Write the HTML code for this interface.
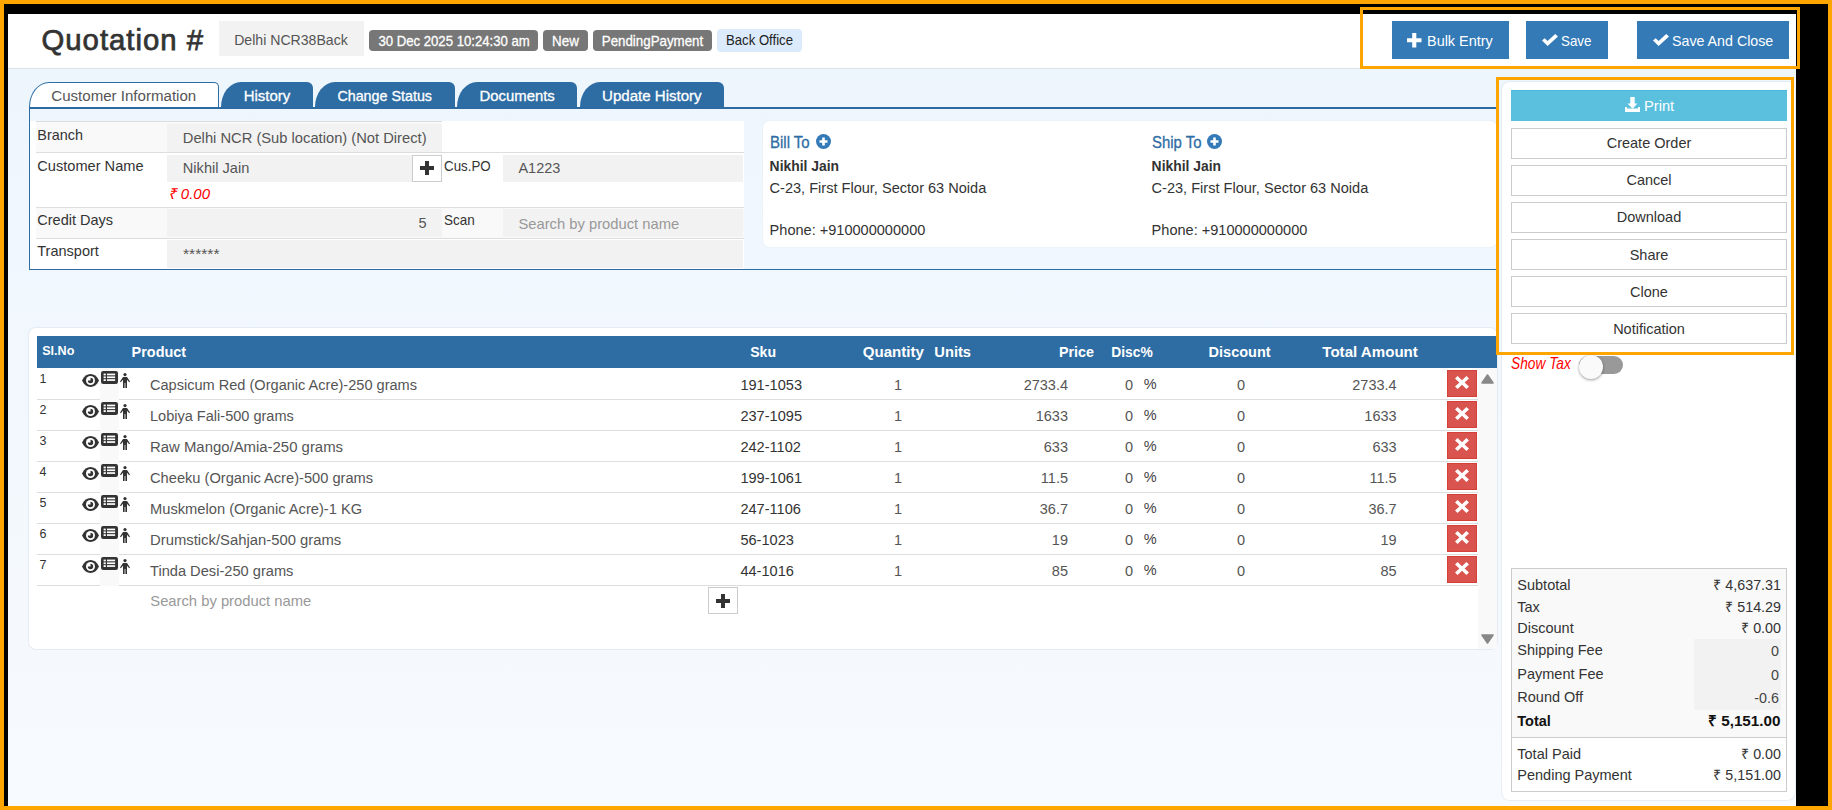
<!DOCTYPE html>
<html><head><meta charset="utf-8"><style>
html,body{margin:0;padding:0;width:1832px;height:810px;overflow:hidden;position:relative;font-family:"Liberation Sans",sans-serif;}
.t{position:absolute;white-space:nowrap;}
.r{position:absolute;}
</style></head><body>
<div class="r" style="left:0px;top:0px;width:1832px;height:810px;background:#ffa500;"></div>
<div class="r" style="left:4px;top:4px;width:1824px;height:802px;background:#000;"></div>
<div class="r" style="left:8px;top:14px;width:1788px;height:792px;background:#f2f7fc;"></div>
<div class="r" style="left:8px;top:14px;width:1788px;height:54px;background:#fff;"></div>
<div class="r" style="left:8px;top:68px;width:1788px;height:1px;background:#dde3e8;"></div>
<div class="r" style="left:8px;top:69px;width:1788px;height:737px;background:linear-gradient(#eef6fd,#f7fafe);"></div>
<div class="t" style="left:41.5px;top:25px;font-size:29.3px;line-height:29.3px;font-weight:400;color:#333;font-style:normal;letter-spacing:1px;-webkit-text-stroke:0.75px #333;">Quotation #</div>
<div class="r" style="left:219px;top:21px;width:145px;height:35px;background:#f2f2f2;"></div>
<div class="t" style="left:234.2px;top:33px;font-size:14.1px;line-height:14.1px;font-weight:400;color:#555;font-style:normal;">Delhi NCR38Back</div>
<div class="r" style="left:369px;top:30px;width:169px;height:21px;background:#777;border-radius:4px;"></div>
<div class="t" style="left:369px;width:169px;text-align:center;top:34px;font-size:14.8px;line-height:14.8px;font-weight:400;color:#fff;font-style:normal;-webkit-text-stroke:0.3px #fff;transform:scaleX(0.8890);transform-origin:center;">30 Dec 2025 10:24:30 am</div>
<div class="r" style="left:543px;top:30px;width:45px;height:21px;background:#777;border-radius:4px;"></div>
<div class="t" style="left:543px;width:45px;text-align:center;top:34px;font-size:14.8px;line-height:14.8px;font-weight:400;color:#fff;font-style:normal;-webkit-text-stroke:0.3px #fff;transform:scaleX(0.9051);transform-origin:center;">New</div>
<div class="r" style="left:593px;top:30px;width:119px;height:21px;background:#777;border-radius:4px;"></div>
<div class="t" style="left:593px;width:119px;text-align:center;top:34px;font-size:14.8px;line-height:14.8px;font-weight:400;color:#fff;font-style:normal;-webkit-text-stroke:0.3px #fff;transform:scaleX(0.9006);transform-origin:center;">PendingPayment</div>
<div class="r" style="left:717px;top:29px;width:85px;height:23px;background:#dcebfb;border-radius:4px;"></div>
<div class="t" style="left:717px;width:85px;text-align:center;top:33px;font-size:14.8px;line-height:14.8px;font-weight:400;color:#222;font-style:normal;transform:scaleX(0.8887);transform-origin:center;">Back Office</div>
<div class="r" style="left:1392px;top:21px;width:117px;height:38px;background:#337ab7;"></div>
<svg class="r" style="left:1407px;top:33px" width="14.5" height="14.5" viewBox="0 0 14 14"><path d="M5 0h4v5h5v4H9v5H5V9H0V5h5z" fill="#fff"/></svg>
<div class="t" style="left:1427px;top:33px;font-size:15px;line-height:15px;font-weight:400;color:#fff;font-style:normal;transform:scaleX(0.9626);transform-origin:left;">Bulk Entry</div>
<div class="r" style="left:1526px;top:21px;width:82px;height:38px;background:#337ab7;"></div>
<svg class="r" style="left:1542px;top:34px" width="16" height="12" viewBox="0 0 16 12"><path d="M0 6.6 L2.6 4.2 L5.6 7 L13.2 0 L16 2.6 L5.6 12 Z" fill="#fff"/></svg>
<div class="t" style="left:1561.3px;top:33px;font-size:15px;line-height:15px;font-weight:400;color:#fff;font-style:normal;transform:scaleX(0.8917);transform-origin:left;">Save</div>
<div class="r" style="left:1637px;top:21px;width:152px;height:38px;background:#337ab7;"></div>
<svg class="r" style="left:1653px;top:34px" width="16" height="12" viewBox="0 0 16 12"><path d="M0 6.6 L2.6 4.2 L5.6 7 L13.2 0 L16 2.6 L5.6 12 Z" fill="#fff"/></svg>
<div class="t" style="left:1672.4px;top:33px;font-size:15px;line-height:15px;font-weight:400;color:#fff;font-style:normal;transform:scaleX(0.9489);transform-origin:left;">Save And Close</div>
<div class="r" style="left:1360px;top:7px;width:440px;height:62px;border:3px solid #ffa500;box-sizing:border-box;"></div>
<div class="r" style="left:29px;top:82px;width:190px;height:26px;background:#fff;border:1px solid #2e6da4;border-bottom:none;border-radius:20px 5px 0 0 / 25px 5px 0 0;box-sizing:border-box;"></div>
<div class="t" style="left:51.25px;top:88px;font-size:15.08px;line-height:15.08px;font-weight:400;color:#555;font-style:normal;">Customer Information</div>
<div class="r" style="left:221px;top:82px;width:92px;height:26px;background:#2e6da4;border-radius:20px 6px 0 0 / 25px 6px 0 0;"></div>
<div class="t" style="left:243.7px;top:88px;font-size:15.0px;line-height:15.0px;font-weight:400;color:#fff;font-style:normal;-webkit-text-stroke:0.3px #fff;">History</div>
<div class="r" style="left:315px;top:82px;width:140px;height:26px;background:#2e6da4;border-radius:20px 6px 0 0 / 25px 6px 0 0;"></div>
<div class="t" style="left:337.4px;top:89px;font-size:14.3px;line-height:14.3px;font-weight:400;color:#fff;font-style:normal;-webkit-text-stroke:0.3px #fff;">Change Status</div>
<div class="r" style="left:457px;top:82px;width:120px;height:26px;background:#2e6da4;border-radius:20px 6px 0 0 / 25px 6px 0 0;"></div>
<div class="t" style="left:479.5px;top:89px;font-size:14.9px;line-height:14.9px;font-weight:400;color:#fff;font-style:normal;-webkit-text-stroke:0.3px #fff;">Documents</div>
<div class="r" style="left:580px;top:82px;width:144px;height:26px;background:#2e6da4;border-radius:20px 6px 0 0 / 25px 6px 0 0;"></div>
<div class="t" style="left:602px;top:88px;font-size:15.07px;line-height:15.07px;font-weight:400;color:#fff;font-style:normal;-webkit-text-stroke:0.3px #fff;">Update History</div>
<div class="r" style="left:29px;top:107px;width:1468px;height:2px;background:#2d6aa1;"></div>
<div class="r" style="left:29px;top:109px;width:1px;height:161px;background:#2e6da4;"></div>
<div class="r" style="left:29px;top:269px;width:1468px;height:1px;background:#2e6da4;"></div>
<div class="r" style="left:30px;top:121px;width:714px;height:148px;background:#fff;"></div>
<div class="r" style="left:36px;top:121px;width:406px;height:31px;background:#f9f9f9;"></div>
<div class="r" style="left:442px;top:121px;width:302px;height:31px;background:#fff;"></div>
<div class="r" style="left:36px;top:152px;width:708px;height:55px;background:#fff;"></div>
<div class="r" style="left:36px;top:207px;width:708px;height:31px;background:#f9f9f9;"></div>
<div class="r" style="left:36px;top:238px;width:708px;height:31px;background:#fff;"></div>
<div class="r" style="left:36px;top:121px;width:406px;height:1px;background:#dddddd;"></div>
<div class="r" style="left:36px;top:152px;width:708px;height:1px;background:#dddddd;"></div>
<div class="r" style="left:36px;top:207px;width:708px;height:1px;background:#dddddd;"></div>
<div class="r" style="left:36px;top:238px;width:708px;height:1px;background:#dddddd;"></div>
<div class="r" style="left:167px;top:124px;width:275px;height:28px;background:#f2f2f2;"></div>
<div class="r" style="left:167px;top:155px;width:245px;height:27px;background:#f2f2f2;"></div>
<div class="r" style="left:503px;top:155px;width:240px;height:27px;background:#f2f2f2;"></div>
<div class="r" style="left:167px;top:209px;width:275px;height:28px;background:#f2f2f2;"></div>
<div class="r" style="left:503px;top:209px;width:240px;height:28px;background:#f2f2f2;"></div>
<div class="r" style="left:167px;top:240px;width:576px;height:28px;background:#f2f2f2;"></div>
<div class="r" style="left:412px;top:155px;width:30px;height:27px;background:#fff;border:1px solid #ccc;box-sizing:border-box;"></div>
<svg class="r" style="left:420px;top:161px" width="14" height="14" viewBox="0 0 14 14"><path d="M5 0h4v5h5v4H9v5H5V9H0V5h5z" fill="#333"/></svg>
<div class="t" style="left:37.3px;top:128px;font-size:14.4px;line-height:14.4px;font-weight:400;color:#333;font-style:normal;">Branch</div>
<div class="t" style="left:37.3px;top:159px;font-size:14.6px;line-height:14.6px;font-weight:400;color:#333;font-style:normal;">Customer Name</div>
<div class="t" style="left:37.3px;top:213px;font-size:14.5px;line-height:14.5px;font-weight:400;color:#333;font-style:normal;">Credit Days</div>
<div class="t" style="left:37.3px;top:244px;font-size:14.5px;line-height:14.5px;font-weight:400;color:#333;font-style:normal;">Transport</div>
<div class="t" style="left:182.8px;top:131px;font-size:14.73px;line-height:14.73px;font-weight:400;color:#555;font-style:normal;">Delhi NCR (Sub location) (Not Direct)</div>
<div class="t" style="left:182.8px;top:161px;font-size:14.6px;line-height:14.6px;font-weight:400;color:#555;font-style:normal;">Nikhil Jain</div>
<div class="t" style="left:167.7px;top:186px;font-size:15px;line-height:15px;font-weight:400;color:#f00;font-style:italic;">₹ 0.00</div>
<div class="t" style="right:1405.5px;top:216px;font-size:14.5px;line-height:14.5px;font-weight:400;color:#555;font-style:normal;">5</div>
<div class="t" style="left:182.8px;top:247px;font-size:14.5px;line-height:14.5px;font-weight:400;color:#555;font-style:normal;transform:scaleX(1.0780);transform-origin:left;">******</div>
<div class="t" style="left:444.4px;top:159px;font-size:14.5px;line-height:14.5px;font-weight:400;color:#333;font-style:normal;transform:scaleX(0.9199);transform-origin:left;">Cus.PO</div>
<div class="t" style="left:444.4px;top:213px;font-size:14.5px;line-height:14.5px;font-weight:400;color:#333;font-style:normal;transform:scaleX(0.9285);transform-origin:left;">Scan</div>
<div class="t" style="left:518.4px;top:161px;font-size:14.5px;line-height:14.5px;font-weight:400;color:#555;font-style:normal;">A1223</div>
<div class="t" style="left:518.4px;top:217px;font-size:14.77px;line-height:14.77px;font-weight:400;color:#999;font-style:normal;">Search by product name</div>
<div class="r" style="left:763px;top:121px;width:734px;height:126px;background:#fff;border-radius:7px;box-shadow:0 0 0 1px rgba(222,230,238,0.25);"></div>
<div class="t" style="left:769.6px;top:135px;font-size:16px;line-height:16px;font-weight:400;color:#2e6da4;font-style:normal;-webkit-text-stroke:0.3px #2e6da4;transform:scaleX(0.9365);transform-origin:left;">Bill To</div>
<div class="t" style="left:769.6px;top:160px;font-size:13.9px;line-height:13.9px;font-weight:700;color:#333;font-style:normal;">Nikhil Jain</div>
<div class="t" style="left:769.6px;top:181px;font-size:14.55px;line-height:14.55px;font-weight:400;color:#333;font-style:normal;">C-23, First Flour, Sector 63 Noida</div>
<div class="t" style="left:769.6px;top:223px;font-size:14.55px;line-height:14.55px;font-weight:400;color:#333;font-style:normal;">Phone: +910000000000</div>
<div class="t" style="left:1151.6px;top:135px;font-size:16px;line-height:16px;font-weight:400;color:#2e6da4;font-style:normal;-webkit-text-stroke:0.3px #2e6da4;transform:scaleX(0.9326);transform-origin:left;">Ship To</div>
<div class="t" style="left:1151.6px;top:160px;font-size:13.9px;line-height:13.9px;font-weight:700;color:#333;font-style:normal;">Nikhil Jain</div>
<div class="t" style="left:1151.6px;top:181px;font-size:14.55px;line-height:14.55px;font-weight:400;color:#333;font-style:normal;">C-23, First Flour, Sector 63 Noida</div>
<div class="t" style="left:1151.6px;top:223px;font-size:14.55px;line-height:14.55px;font-weight:400;color:#333;font-style:normal;">Phone: +910000000000</div>
<svg class="r" style="left:816px;top:134px" width="15" height="15" viewBox="0 0 15 15"><circle cx="7.5" cy="7.5" r="7.5" fill="#337ab7"/><path d="M6.2 3.5h2.6v2.7h2.7v2.6H8.8v2.7H6.2V8.8H3.5V6.2h2.7z" fill="#fff"/></svg>
<svg class="r" style="left:1207px;top:134px" width="15" height="15" viewBox="0 0 15 15"><circle cx="7.5" cy="7.5" r="7.5" fill="#337ab7"/><path d="M6.2 3.5h2.6v2.7h2.7v2.6H8.8v2.7H6.2V8.8H3.5V6.2h2.7z" fill="#fff"/></svg>
<div class="r" style="left:29px;top:328px;width:1468px;height:321px;background:#fff;border-radius:7px;box-shadow:0 0 0 1px rgba(222,230,238,0.7);"></div>
<div class="r" style="left:37px;top:336px;width:1460px;height:32px;background:#2e6da4;"></div>
<div class="t" style="left:42.2px;top:345px;font-size:12.6px;line-height:12.6px;font-weight:700;color:#fff;font-style:normal;">Sl.No</div>
<div class="t" style="left:131.6px;top:345px;font-size:14.45px;line-height:14.45px;font-weight:700;color:#fff;font-style:normal;">Product</div>
<div class="t" style="left:750.2px;top:345px;font-size:14.1px;line-height:14.1px;font-weight:700;color:#fff;font-style:normal;">Sku</div>
<div class="t" style="left:862.7px;top:344px;font-size:15.1px;line-height:15.1px;font-weight:700;color:#fff;font-style:normal;">Quantity</div>
<div class="t" style="left:934.3px;top:345px;font-size:14.7px;line-height:14.7px;font-weight:700;color:#fff;font-style:normal;">Units</div>
<div class="t" style="right:738px;top:345px;font-size:14.3px;line-height:14.3px;font-weight:700;color:#fff;font-style:normal;">Price</div>
<div class="t" style="left:1111.3px;top:346px;font-size:13.8px;line-height:13.8px;font-weight:700;color:#fff;font-style:normal;">Disc%</div>
<div class="t" style="left:1208.6px;top:345px;font-size:14.5px;line-height:14.5px;font-weight:700;color:#fff;font-style:normal;">Discount</div>
<div class="t" style="left:1322.3px;top:344px;font-size:15.1px;line-height:15.1px;font-weight:700;color:#fff;font-style:normal;">Total Amount</div>
<div class="r" style="left:1478px;top:368px;width:19px;height:281px;background:#f9f9f9;"></div>
<svg class="r" style="left:1481px;top:374px" width="13" height="10" viewBox="0 0 13 10"><path d="M6.5 1 L12 9 H1 Z" fill="#888" stroke="#888" stroke-width="1.6" stroke-linejoin="round"/></svg>
<svg class="r" style="left:1481px;top:634px" width="13" height="10" viewBox="0 0 13 10"><path d="M6.5 9 L12 1 H1 Z" fill="#888" stroke="#888" stroke-width="1.6" stroke-linejoin="round"/></svg>
<div class="r" style="left:37px;top:399px;width:1441px;height:1px;background:#dddddd;"></div>
<div class="r" style="left:100px;top:368px;width:19px;height:32px;background:#f9f9f9;"></div>
<div class="t" style="left:39.5px;top:373px;font-size:12.5px;line-height:12.5px;font-weight:400;color:#333;font-style:normal;">1</div>
<svg class="r" style="left:82px;top:374px" width="17" height="13" viewBox="0 0 17 13"><path d="M0 6.5 C2.2 2 5 0 8.5 0 C12 0 14.8 2 17 6.5 C14.8 11 12 13 8.5 13 C5 13 2.2 11 0 6.5Z" fill="#333"/><circle cx="8.5" cy="6.5" r="4.5" fill="#fff"/><path d="M8.5 6.5 L8.5 3.8 A2.7 2.7 0 1 1 5.8 6.5 Z" fill="#333"/></svg>
<svg class="r" style="left:101px;top:371px" width="17" height="13" viewBox="0 0 17 13"><rect x="0" y="0" width="17" height="13" rx="2.2" fill="#333"/><rect x="2.6" y="2.6" width="2.2" height="1.8" fill="#fff"/><rect x="2.6" y="5.4" width="2.2" height="1.8" fill="#fff"/><rect x="2.6" y="8.2" width="2.2" height="1.8" fill="#fff"/><rect x="6" y="2.6" width="8.1" height="1.7" fill="#fff"/><rect x="6" y="5.4" width="8.1" height="1.7" fill="#fff"/><rect x="6" y="8.2" width="8.1" height="1.7" fill="#fff"/></svg>
<svg class="r" style="left:120px;top:373px" width="10" height="15" viewBox="0 0 10 15"><circle cx="5" cy="1.6" r="1.6" fill="#333"/><path d="M3 4 H7 L10 8.6 L9.2 9.2 L7 6.8 V15 H5.4 V10 H4.6 V15 H3 V6.8 L0.8 9.2 L0 8.6Z" fill="#333"/></svg>
<div class="t" style="left:150.2px;top:377px;font-size:15.5px;line-height:15.5px;font-weight:400;color:#555;font-style:normal;transform:scaleX(0.9392);transform-origin:left;">Capsicum Red (Organic Acre)-250 grams</div>
<div class="t" style="left:740.4px;top:378px;font-size:14.58px;line-height:14.58px;font-weight:400;color:#333;font-style:normal;">191-1053</div>
<div class="t" style="right:930px;top:378px;font-size:14.5px;line-height:14.5px;font-weight:400;color:#555;font-style:normal;">1</div>
<div class="t" style="right:764px;top:378px;font-size:14.5px;line-height:14.5px;font-weight:400;color:#555;font-style:normal;">2733.4</div>
<div class="t" style="right:699px;top:378px;font-size:14.5px;line-height:14.5px;font-weight:400;color:#555;font-style:normal;">0</div>
<div class="t" style="left:1143.7px;top:377px;font-size:14.5px;line-height:14.5px;font-weight:400;color:#444;font-style:normal;">%</div>
<div class="t" style="right:587px;top:378px;font-size:14.5px;line-height:14.5px;font-weight:400;color:#555;font-style:normal;">0</div>
<div class="t" style="right:435.4000000000001px;top:378px;font-size:14.5px;line-height:14.5px;font-weight:400;color:#555;font-style:normal;">2733.4</div>
<div class="r" style="left:1447px;top:370px;width:30px;height:27px;background:#d9534f;border:1px solid #d43f3a;box-sizing:border-box;"></div><svg class="r" style="left:1455px;top:376px" width="14" height="13" viewBox="0 0 14 13"><path d="M0 2.6 L2.6 0 L7 4.2 L11.4 0 L14 2.6 L9.6 6.5 L14 10.4 L11.4 13 L7 8.8 L2.6 13 L0 10.4 L4.4 6.5Z" fill="#fff"/></svg>
<div class="r" style="left:37px;top:430px;width:1441px;height:1px;background:#dddddd;"></div>
<div class="r" style="left:100px;top:399px;width:19px;height:32px;background:#f9f9f9;"></div>
<div class="t" style="left:39.5px;top:404px;font-size:12.5px;line-height:12.5px;font-weight:400;color:#333;font-style:normal;">2</div>
<svg class="r" style="left:82px;top:405px" width="17" height="13" viewBox="0 0 17 13"><path d="M0 6.5 C2.2 2 5 0 8.5 0 C12 0 14.8 2 17 6.5 C14.8 11 12 13 8.5 13 C5 13 2.2 11 0 6.5Z" fill="#333"/><circle cx="8.5" cy="6.5" r="4.5" fill="#fff"/><path d="M8.5 6.5 L8.5 3.8 A2.7 2.7 0 1 1 5.8 6.5 Z" fill="#333"/></svg>
<svg class="r" style="left:101px;top:402px" width="17" height="13" viewBox="0 0 17 13"><rect x="0" y="0" width="17" height="13" rx="2.2" fill="#333"/><rect x="2.6" y="2.6" width="2.2" height="1.8" fill="#fff"/><rect x="2.6" y="5.4" width="2.2" height="1.8" fill="#fff"/><rect x="2.6" y="8.2" width="2.2" height="1.8" fill="#fff"/><rect x="6" y="2.6" width="8.1" height="1.7" fill="#fff"/><rect x="6" y="5.4" width="8.1" height="1.7" fill="#fff"/><rect x="6" y="8.2" width="8.1" height="1.7" fill="#fff"/></svg>
<svg class="r" style="left:120px;top:404px" width="10" height="15" viewBox="0 0 10 15"><circle cx="5" cy="1.6" r="1.6" fill="#333"/><path d="M3 4 H7 L10 8.6 L9.2 9.2 L7 6.8 V15 H5.4 V10 H4.6 V15 H3 V6.8 L0.8 9.2 L0 8.6Z" fill="#333"/></svg>
<div class="t" style="left:150.2px;top:408px;font-size:15.5px;line-height:15.5px;font-weight:400;color:#555;font-style:normal;transform:scaleX(0.9377);transform-origin:left;">Lobiya Fali-500 grams</div>
<div class="t" style="left:740.4px;top:409px;font-size:14.58px;line-height:14.58px;font-weight:400;color:#333;font-style:normal;">237-1095</div>
<div class="t" style="right:930px;top:409px;font-size:14.5px;line-height:14.5px;font-weight:400;color:#555;font-style:normal;">1</div>
<div class="t" style="right:764px;top:409px;font-size:14.5px;line-height:14.5px;font-weight:400;color:#555;font-style:normal;">1633</div>
<div class="t" style="right:699px;top:409px;font-size:14.5px;line-height:14.5px;font-weight:400;color:#555;font-style:normal;">0</div>
<div class="t" style="left:1143.7px;top:408px;font-size:14.5px;line-height:14.5px;font-weight:400;color:#444;font-style:normal;">%</div>
<div class="t" style="right:587px;top:409px;font-size:14.5px;line-height:14.5px;font-weight:400;color:#555;font-style:normal;">0</div>
<div class="t" style="right:435.4000000000001px;top:409px;font-size:14.5px;line-height:14.5px;font-weight:400;color:#555;font-style:normal;">1633</div>
<div class="r" style="left:1447px;top:401px;width:30px;height:27px;background:#d9534f;border:1px solid #d43f3a;box-sizing:border-box;"></div><svg class="r" style="left:1455px;top:407px" width="14" height="13" viewBox="0 0 14 13"><path d="M0 2.6 L2.6 0 L7 4.2 L11.4 0 L14 2.6 L9.6 6.5 L14 10.4 L11.4 13 L7 8.8 L2.6 13 L0 10.4 L4.4 6.5Z" fill="#fff"/></svg>
<div class="r" style="left:37px;top:461px;width:1441px;height:1px;background:#dddddd;"></div>
<div class="r" style="left:100px;top:430px;width:19px;height:32px;background:#f9f9f9;"></div>
<div class="t" style="left:39.5px;top:435px;font-size:12.5px;line-height:12.5px;font-weight:400;color:#333;font-style:normal;">3</div>
<svg class="r" style="left:82px;top:436px" width="17" height="13" viewBox="0 0 17 13"><path d="M0 6.5 C2.2 2 5 0 8.5 0 C12 0 14.8 2 17 6.5 C14.8 11 12 13 8.5 13 C5 13 2.2 11 0 6.5Z" fill="#333"/><circle cx="8.5" cy="6.5" r="4.5" fill="#fff"/><path d="M8.5 6.5 L8.5 3.8 A2.7 2.7 0 1 1 5.8 6.5 Z" fill="#333"/></svg>
<svg class="r" style="left:101px;top:433px" width="17" height="13" viewBox="0 0 17 13"><rect x="0" y="0" width="17" height="13" rx="2.2" fill="#333"/><rect x="2.6" y="2.6" width="2.2" height="1.8" fill="#fff"/><rect x="2.6" y="5.4" width="2.2" height="1.8" fill="#fff"/><rect x="2.6" y="8.2" width="2.2" height="1.8" fill="#fff"/><rect x="6" y="2.6" width="8.1" height="1.7" fill="#fff"/><rect x="6" y="5.4" width="8.1" height="1.7" fill="#fff"/><rect x="6" y="8.2" width="8.1" height="1.7" fill="#fff"/></svg>
<svg class="r" style="left:120px;top:435px" width="10" height="15" viewBox="0 0 10 15"><circle cx="5" cy="1.6" r="1.6" fill="#333"/><path d="M3 4 H7 L10 8.6 L9.2 9.2 L7 6.8 V15 H5.4 V10 H4.6 V15 H3 V6.8 L0.8 9.2 L0 8.6Z" fill="#333"/></svg>
<div class="t" style="left:150.2px;top:439px;font-size:15.5px;line-height:15.5px;font-weight:400;color:#555;font-style:normal;transform:scaleX(0.9615);transform-origin:left;">Raw Mango/Amia-250 grams</div>
<div class="t" style="left:740.4px;top:440px;font-size:14.58px;line-height:14.58px;font-weight:400;color:#333;font-style:normal;">242-1102</div>
<div class="t" style="right:930px;top:440px;font-size:14.5px;line-height:14.5px;font-weight:400;color:#555;font-style:normal;">1</div>
<div class="t" style="right:764px;top:440px;font-size:14.5px;line-height:14.5px;font-weight:400;color:#555;font-style:normal;">633</div>
<div class="t" style="right:699px;top:440px;font-size:14.5px;line-height:14.5px;font-weight:400;color:#555;font-style:normal;">0</div>
<div class="t" style="left:1143.7px;top:439px;font-size:14.5px;line-height:14.5px;font-weight:400;color:#444;font-style:normal;">%</div>
<div class="t" style="right:587px;top:440px;font-size:14.5px;line-height:14.5px;font-weight:400;color:#555;font-style:normal;">0</div>
<div class="t" style="right:435.4000000000001px;top:440px;font-size:14.5px;line-height:14.5px;font-weight:400;color:#555;font-style:normal;">633</div>
<div class="r" style="left:1447px;top:432px;width:30px;height:27px;background:#d9534f;border:1px solid #d43f3a;box-sizing:border-box;"></div><svg class="r" style="left:1455px;top:438px" width="14" height="13" viewBox="0 0 14 13"><path d="M0 2.6 L2.6 0 L7 4.2 L11.4 0 L14 2.6 L9.6 6.5 L14 10.4 L11.4 13 L7 8.8 L2.6 13 L0 10.4 L4.4 6.5Z" fill="#fff"/></svg>
<div class="r" style="left:37px;top:492px;width:1441px;height:1px;background:#dddddd;"></div>
<div class="r" style="left:100px;top:461px;width:19px;height:32px;background:#f9f9f9;"></div>
<div class="t" style="left:39.5px;top:466px;font-size:12.5px;line-height:12.5px;font-weight:400;color:#333;font-style:normal;">4</div>
<svg class="r" style="left:82px;top:467px" width="17" height="13" viewBox="0 0 17 13"><path d="M0 6.5 C2.2 2 5 0 8.5 0 C12 0 14.8 2 17 6.5 C14.8 11 12 13 8.5 13 C5 13 2.2 11 0 6.5Z" fill="#333"/><circle cx="8.5" cy="6.5" r="4.5" fill="#fff"/><path d="M8.5 6.5 L8.5 3.8 A2.7 2.7 0 1 1 5.8 6.5 Z" fill="#333"/></svg>
<svg class="r" style="left:101px;top:464px" width="17" height="13" viewBox="0 0 17 13"><rect x="0" y="0" width="17" height="13" rx="2.2" fill="#333"/><rect x="2.6" y="2.6" width="2.2" height="1.8" fill="#fff"/><rect x="2.6" y="5.4" width="2.2" height="1.8" fill="#fff"/><rect x="2.6" y="8.2" width="2.2" height="1.8" fill="#fff"/><rect x="6" y="2.6" width="8.1" height="1.7" fill="#fff"/><rect x="6" y="5.4" width="8.1" height="1.7" fill="#fff"/><rect x="6" y="8.2" width="8.1" height="1.7" fill="#fff"/></svg>
<svg class="r" style="left:120px;top:466px" width="10" height="15" viewBox="0 0 10 15"><circle cx="5" cy="1.6" r="1.6" fill="#333"/><path d="M3 4 H7 L10 8.6 L9.2 9.2 L7 6.8 V15 H5.4 V10 H4.6 V15 H3 V6.8 L0.8 9.2 L0 8.6Z" fill="#333"/></svg>
<div class="t" style="left:150.2px;top:470px;font-size:15.5px;line-height:15.5px;font-weight:400;color:#555;font-style:normal;transform:scaleX(0.9452);transform-origin:left;">Cheeku (Organic Acre)-500 grams</div>
<div class="t" style="left:740.4px;top:471px;font-size:14.58px;line-height:14.58px;font-weight:400;color:#333;font-style:normal;">199-1061</div>
<div class="t" style="right:930px;top:471px;font-size:14.5px;line-height:14.5px;font-weight:400;color:#555;font-style:normal;">1</div>
<div class="t" style="right:764px;top:471px;font-size:14.5px;line-height:14.5px;font-weight:400;color:#555;font-style:normal;">11.5</div>
<div class="t" style="right:699px;top:471px;font-size:14.5px;line-height:14.5px;font-weight:400;color:#555;font-style:normal;">0</div>
<div class="t" style="left:1143.7px;top:470px;font-size:14.5px;line-height:14.5px;font-weight:400;color:#444;font-style:normal;">%</div>
<div class="t" style="right:587px;top:471px;font-size:14.5px;line-height:14.5px;font-weight:400;color:#555;font-style:normal;">0</div>
<div class="t" style="right:435.4000000000001px;top:471px;font-size:14.5px;line-height:14.5px;font-weight:400;color:#555;font-style:normal;">11.5</div>
<div class="r" style="left:1447px;top:463px;width:30px;height:27px;background:#d9534f;border:1px solid #d43f3a;box-sizing:border-box;"></div><svg class="r" style="left:1455px;top:469px" width="14" height="13" viewBox="0 0 14 13"><path d="M0 2.6 L2.6 0 L7 4.2 L11.4 0 L14 2.6 L9.6 6.5 L14 10.4 L11.4 13 L7 8.8 L2.6 13 L0 10.4 L4.4 6.5Z" fill="#fff"/></svg>
<div class="r" style="left:37px;top:523px;width:1441px;height:1px;background:#dddddd;"></div>
<div class="r" style="left:100px;top:492px;width:19px;height:32px;background:#f9f9f9;"></div>
<div class="t" style="left:39.5px;top:497px;font-size:12.5px;line-height:12.5px;font-weight:400;color:#333;font-style:normal;">5</div>
<svg class="r" style="left:82px;top:498px" width="17" height="13" viewBox="0 0 17 13"><path d="M0 6.5 C2.2 2 5 0 8.5 0 C12 0 14.8 2 17 6.5 C14.8 11 12 13 8.5 13 C5 13 2.2 11 0 6.5Z" fill="#333"/><circle cx="8.5" cy="6.5" r="4.5" fill="#fff"/><path d="M8.5 6.5 L8.5 3.8 A2.7 2.7 0 1 1 5.8 6.5 Z" fill="#333"/></svg>
<svg class="r" style="left:101px;top:495px" width="17" height="13" viewBox="0 0 17 13"><rect x="0" y="0" width="17" height="13" rx="2.2" fill="#333"/><rect x="2.6" y="2.6" width="2.2" height="1.8" fill="#fff"/><rect x="2.6" y="5.4" width="2.2" height="1.8" fill="#fff"/><rect x="2.6" y="8.2" width="2.2" height="1.8" fill="#fff"/><rect x="6" y="2.6" width="8.1" height="1.7" fill="#fff"/><rect x="6" y="5.4" width="8.1" height="1.7" fill="#fff"/><rect x="6" y="8.2" width="8.1" height="1.7" fill="#fff"/></svg>
<svg class="r" style="left:120px;top:497px" width="10" height="15" viewBox="0 0 10 15"><circle cx="5" cy="1.6" r="1.6" fill="#333"/><path d="M3 4 H7 L10 8.6 L9.2 9.2 L7 6.8 V15 H5.4 V10 H4.6 V15 H3 V6.8 L0.8 9.2 L0 8.6Z" fill="#333"/></svg>
<div class="t" style="left:150.2px;top:501px;font-size:15.5px;line-height:15.5px;font-weight:400;color:#555;font-style:normal;transform:scaleX(0.9475);transform-origin:left;">Muskmelon (Organic Acre)-1 KG</div>
<div class="t" style="left:740.4px;top:502px;font-size:14.58px;line-height:14.58px;font-weight:400;color:#333;font-style:normal;">247-1106</div>
<div class="t" style="right:930px;top:502px;font-size:14.5px;line-height:14.5px;font-weight:400;color:#555;font-style:normal;">1</div>
<div class="t" style="right:764px;top:502px;font-size:14.5px;line-height:14.5px;font-weight:400;color:#555;font-style:normal;">36.7</div>
<div class="t" style="right:699px;top:502px;font-size:14.5px;line-height:14.5px;font-weight:400;color:#555;font-style:normal;">0</div>
<div class="t" style="left:1143.7px;top:501px;font-size:14.5px;line-height:14.5px;font-weight:400;color:#444;font-style:normal;">%</div>
<div class="t" style="right:587px;top:502px;font-size:14.5px;line-height:14.5px;font-weight:400;color:#555;font-style:normal;">0</div>
<div class="t" style="right:435.4000000000001px;top:502px;font-size:14.5px;line-height:14.5px;font-weight:400;color:#555;font-style:normal;">36.7</div>
<div class="r" style="left:1447px;top:494px;width:30px;height:27px;background:#d9534f;border:1px solid #d43f3a;box-sizing:border-box;"></div><svg class="r" style="left:1455px;top:500px" width="14" height="13" viewBox="0 0 14 13"><path d="M0 2.6 L2.6 0 L7 4.2 L11.4 0 L14 2.6 L9.6 6.5 L14 10.4 L11.4 13 L7 8.8 L2.6 13 L0 10.4 L4.4 6.5Z" fill="#fff"/></svg>
<div class="r" style="left:37px;top:554px;width:1441px;height:1px;background:#dddddd;"></div>
<div class="r" style="left:100px;top:523px;width:19px;height:32px;background:#f9f9f9;"></div>
<div class="t" style="left:39.5px;top:528px;font-size:12.5px;line-height:12.5px;font-weight:400;color:#333;font-style:normal;">6</div>
<svg class="r" style="left:82px;top:529px" width="17" height="13" viewBox="0 0 17 13"><path d="M0 6.5 C2.2 2 5 0 8.5 0 C12 0 14.8 2 17 6.5 C14.8 11 12 13 8.5 13 C5 13 2.2 11 0 6.5Z" fill="#333"/><circle cx="8.5" cy="6.5" r="4.5" fill="#fff"/><path d="M8.5 6.5 L8.5 3.8 A2.7 2.7 0 1 1 5.8 6.5 Z" fill="#333"/></svg>
<svg class="r" style="left:101px;top:526px" width="17" height="13" viewBox="0 0 17 13"><rect x="0" y="0" width="17" height="13" rx="2.2" fill="#333"/><rect x="2.6" y="2.6" width="2.2" height="1.8" fill="#fff"/><rect x="2.6" y="5.4" width="2.2" height="1.8" fill="#fff"/><rect x="2.6" y="8.2" width="2.2" height="1.8" fill="#fff"/><rect x="6" y="2.6" width="8.1" height="1.7" fill="#fff"/><rect x="6" y="5.4" width="8.1" height="1.7" fill="#fff"/><rect x="6" y="8.2" width="8.1" height="1.7" fill="#fff"/></svg>
<svg class="r" style="left:120px;top:528px" width="10" height="15" viewBox="0 0 10 15"><circle cx="5" cy="1.6" r="1.6" fill="#333"/><path d="M3 4 H7 L10 8.6 L9.2 9.2 L7 6.8 V15 H5.4 V10 H4.6 V15 H3 V6.8 L0.8 9.2 L0 8.6Z" fill="#333"/></svg>
<div class="t" style="left:150.2px;top:532px;font-size:15.5px;line-height:15.5px;font-weight:400;color:#555;font-style:normal;transform:scaleX(0.9567);transform-origin:left;">Drumstick/Sahjan-500 grams</div>
<div class="t" style="left:740.4px;top:533px;font-size:14.58px;line-height:14.58px;font-weight:400;color:#333;font-style:normal;">56-1023</div>
<div class="t" style="right:930px;top:533px;font-size:14.5px;line-height:14.5px;font-weight:400;color:#555;font-style:normal;">1</div>
<div class="t" style="right:764px;top:533px;font-size:14.5px;line-height:14.5px;font-weight:400;color:#555;font-style:normal;">19</div>
<div class="t" style="right:699px;top:533px;font-size:14.5px;line-height:14.5px;font-weight:400;color:#555;font-style:normal;">0</div>
<div class="t" style="left:1143.7px;top:532px;font-size:14.5px;line-height:14.5px;font-weight:400;color:#444;font-style:normal;">%</div>
<div class="t" style="right:587px;top:533px;font-size:14.5px;line-height:14.5px;font-weight:400;color:#555;font-style:normal;">0</div>
<div class="t" style="right:435.4000000000001px;top:533px;font-size:14.5px;line-height:14.5px;font-weight:400;color:#555;font-style:normal;">19</div>
<div class="r" style="left:1447px;top:525px;width:30px;height:27px;background:#d9534f;border:1px solid #d43f3a;box-sizing:border-box;"></div><svg class="r" style="left:1455px;top:531px" width="14" height="13" viewBox="0 0 14 13"><path d="M0 2.6 L2.6 0 L7 4.2 L11.4 0 L14 2.6 L9.6 6.5 L14 10.4 L11.4 13 L7 8.8 L2.6 13 L0 10.4 L4.4 6.5Z" fill="#fff"/></svg>
<div class="r" style="left:37px;top:585px;width:1441px;height:1px;background:#dddddd;"></div>
<div class="r" style="left:100px;top:554px;width:19px;height:32px;background:#f9f9f9;"></div>
<div class="t" style="left:39.5px;top:559px;font-size:12.5px;line-height:12.5px;font-weight:400;color:#333;font-style:normal;">7</div>
<svg class="r" style="left:82px;top:560px" width="17" height="13" viewBox="0 0 17 13"><path d="M0 6.5 C2.2 2 5 0 8.5 0 C12 0 14.8 2 17 6.5 C14.8 11 12 13 8.5 13 C5 13 2.2 11 0 6.5Z" fill="#333"/><circle cx="8.5" cy="6.5" r="4.5" fill="#fff"/><path d="M8.5 6.5 L8.5 3.8 A2.7 2.7 0 1 1 5.8 6.5 Z" fill="#333"/></svg>
<svg class="r" style="left:101px;top:557px" width="17" height="13" viewBox="0 0 17 13"><rect x="0" y="0" width="17" height="13" rx="2.2" fill="#333"/><rect x="2.6" y="2.6" width="2.2" height="1.8" fill="#fff"/><rect x="2.6" y="5.4" width="2.2" height="1.8" fill="#fff"/><rect x="2.6" y="8.2" width="2.2" height="1.8" fill="#fff"/><rect x="6" y="2.6" width="8.1" height="1.7" fill="#fff"/><rect x="6" y="5.4" width="8.1" height="1.7" fill="#fff"/><rect x="6" y="8.2" width="8.1" height="1.7" fill="#fff"/></svg>
<svg class="r" style="left:120px;top:559px" width="10" height="15" viewBox="0 0 10 15"><circle cx="5" cy="1.6" r="1.6" fill="#333"/><path d="M3 4 H7 L10 8.6 L9.2 9.2 L7 6.8 V15 H5.4 V10 H4.6 V15 H3 V6.8 L0.8 9.2 L0 8.6Z" fill="#333"/></svg>
<div class="t" style="left:150.2px;top:563px;font-size:15.5px;line-height:15.5px;font-weight:400;color:#555;font-style:normal;transform:scaleX(0.9440);transform-origin:left;">Tinda Desi-250 grams</div>
<div class="t" style="left:740.4px;top:564px;font-size:14.58px;line-height:14.58px;font-weight:400;color:#333;font-style:normal;">44-1016</div>
<div class="t" style="right:930px;top:564px;font-size:14.5px;line-height:14.5px;font-weight:400;color:#555;font-style:normal;">1</div>
<div class="t" style="right:764px;top:564px;font-size:14.5px;line-height:14.5px;font-weight:400;color:#555;font-style:normal;">85</div>
<div class="t" style="right:699px;top:564px;font-size:14.5px;line-height:14.5px;font-weight:400;color:#555;font-style:normal;">0</div>
<div class="t" style="left:1143.7px;top:563px;font-size:14.5px;line-height:14.5px;font-weight:400;color:#444;font-style:normal;">%</div>
<div class="t" style="right:587px;top:564px;font-size:14.5px;line-height:14.5px;font-weight:400;color:#555;font-style:normal;">0</div>
<div class="t" style="right:435.4000000000001px;top:564px;font-size:14.5px;line-height:14.5px;font-weight:400;color:#555;font-style:normal;">85</div>
<div class="r" style="left:1447px;top:556px;width:30px;height:27px;background:#d9534f;border:1px solid #d43f3a;box-sizing:border-box;"></div><svg class="r" style="left:1455px;top:562px" width="14" height="13" viewBox="0 0 14 13"><path d="M0 2.6 L2.6 0 L7 4.2 L11.4 0 L14 2.6 L9.6 6.5 L14 10.4 L11.4 13 L7 8.8 L2.6 13 L0 10.4 L4.4 6.5Z" fill="#fff"/></svg>
<div class="t" style="left:150.3px;top:594px;font-size:14.77px;line-height:14.77px;font-weight:400;color:#999;font-style:normal;">Search by product name</div>
<div class="r" style="left:708px;top:587px;width:30px;height:27px;background:#fff;border:1px solid #ccc;box-sizing:border-box;"></div>
<svg class="r" style="left:716px;top:594px" width="14" height="14" viewBox="0 0 14 14"><path d="M5 0h4v5h5v4H9v5H5V9H0V5h5z" fill="#333"/></svg>
<div class="r" style="left:1502px;top:82px;width:293px;height:718px;background:#fff;border-radius:8px;box-shadow:0 0 0 1px rgba(220,228,236,0.6);"></div>
<div class="r" style="left:1511px;top:90px;width:276px;height:31px;background:#5bc0de;border-top:1px solid #46b8da;box-sizing:border-box;"></div>
<svg class="r" style="left:1625px;top:97px" width="15" height="15" viewBox="0 0 15 15"><path d="M5.3 0h4.4v6.5h2.7L7.5 11.7 2.6 6.5h2.7z" fill="#fff"/><path d="M0 10.1h1.9v1.5h11.2v-1.5H15V15H0z" fill="#fff"/></svg>
<div class="t" style="left:1643.6px;top:98px;font-size:15.5px;line-height:15.5px;font-weight:400;color:#fff;font-style:normal;transform:scaleX(0.9475);transform-origin:left;">Print</div>
<div class="r" style="left:1511px;top:128px;width:276px;height:31px;background:#fff;border:1px solid #ccc;box-sizing:border-box;"></div>
<div class="t" style="left:1511px;width:276px;text-align:center;top:136px;font-size:14.5px;line-height:14.5px;font-weight:400;color:#333;font-style:normal;">Create Order</div>
<div class="r" style="left:1511px;top:165px;width:276px;height:31px;background:#fff;border:1px solid #ccc;box-sizing:border-box;"></div>
<div class="t" style="left:1511px;width:276px;text-align:center;top:173px;font-size:14.5px;line-height:14.5px;font-weight:400;color:#333;font-style:normal;">Cancel</div>
<div class="r" style="left:1511px;top:202px;width:276px;height:31px;background:#fff;border:1px solid #ccc;box-sizing:border-box;"></div>
<div class="t" style="left:1511px;width:276px;text-align:center;top:210px;font-size:14.5px;line-height:14.5px;font-weight:400;color:#333;font-style:normal;">Download</div>
<div class="r" style="left:1511px;top:239px;width:276px;height:31px;background:#fff;border:1px solid #ccc;box-sizing:border-box;"></div>
<div class="t" style="left:1511px;width:276px;text-align:center;top:248px;font-size:14.5px;line-height:14.5px;font-weight:400;color:#333;font-style:normal;">Share</div>
<div class="r" style="left:1511px;top:276px;width:276px;height:31px;background:#fff;border:1px solid #ccc;box-sizing:border-box;"></div>
<div class="t" style="left:1511px;width:276px;text-align:center;top:285px;font-size:14.5px;line-height:14.5px;font-weight:400;color:#333;font-style:normal;">Clone</div>
<div class="r" style="left:1511px;top:313px;width:276px;height:31px;background:#fff;border:1px solid #ccc;box-sizing:border-box;"></div>
<div class="t" style="left:1511px;width:276px;text-align:center;top:322px;font-size:14.5px;line-height:14.5px;font-weight:400;color:#333;font-style:normal;">Notification</div>
<div class="r" style="left:1496px;top:77px;width:298px;height:278px;border:3px solid #ffa500;box-sizing:border-box;"></div>
<div class="t" style="left:1511px;top:355px;font-size:16.5px;line-height:16.5px;font-weight:400;color:#f00;font-style:italic;transform:scaleX(0.8322);transform-origin:left;">Show Tax</div>
<div class="r" style="left:1579px;top:356px;width:44px;height:18px;background:#999;border-radius:9px;"></div>
<div class="r" style="left:1579px;top:355px;width:24px;height:24px;border-radius:12px;background:#fafafa;box-shadow:0 1px 3px rgba(0,0,0,0.4);"></div>
<div class="r" style="left:1511px;top:568px;width:276px;height:224px;background:#fff;border:1px solid #ccc;box-sizing:border-box;"></div>
<div class="r" style="left:1512px;top:569px;width:274px;height:168px;background:#f9f9f9;"></div>
<div class="r" style="left:1512px;top:737px;width:274px;height:1px;background:#ccc;"></div>
<div class="r" style="left:1694px;top:639px;width:87px;height:71px;background:#f2f2f2;"></div>
<div class="t" style="left:1517.3px;top:578px;font-size:14.5px;line-height:14.5px;font-weight:400;color:#333;font-style:normal;">Subtotal</div>
<div class="t" style="right:51px;top:578px;font-size:14.3px;line-height:14.3px;font-weight:400;color:#333;font-style:normal;">₹ 4,637.31</div>
<div class="t" style="left:1517.3px;top:600px;font-size:14.5px;line-height:14.5px;font-weight:400;color:#333;font-style:normal;">Tax</div>
<div class="t" style="right:51px;top:600px;font-size:14.3px;line-height:14.3px;font-weight:400;color:#333;font-style:normal;">₹ 514.29</div>
<div class="t" style="left:1517.3px;top:621px;font-size:14.5px;line-height:14.5px;font-weight:400;color:#333;font-style:normal;">Discount</div>
<div class="t" style="right:51px;top:621px;font-size:14.3px;line-height:14.3px;font-weight:400;color:#333;font-style:normal;">₹ 0.00</div>
<div class="t" style="left:1517.3px;top:643px;font-size:14.5px;line-height:14.5px;font-weight:400;color:#333;font-style:normal;">Shipping Fee</div>
<div class="t" style="right:53px;top:644px;font-size:14.3px;line-height:14.3px;font-weight:400;color:#444;font-style:normal;">0</div>
<div class="t" style="left:1517.3px;top:667px;font-size:14.5px;line-height:14.5px;font-weight:400;color:#333;font-style:normal;">Payment Fee</div>
<div class="t" style="right:53px;top:668px;font-size:14.3px;line-height:14.3px;font-weight:400;color:#444;font-style:normal;">0</div>
<div class="t" style="left:1517.3px;top:690px;font-size:14.5px;line-height:14.5px;font-weight:400;color:#333;font-style:normal;">Round Off</div>
<div class="t" style="right:53px;top:691px;font-size:14.3px;line-height:14.3px;font-weight:400;color:#444;font-style:normal;">-0.6</div>
<div class="t" style="left:1517.3px;top:714px;font-size:14.5px;line-height:14.5px;font-weight:700;color:#111;font-style:normal;">Total</div>
<div class="t" style="right:51px;top:713px;font-size:15px;line-height:15px;font-weight:700;color:#111;font-style:normal;transform:scaleX(1.0173);transform-origin:right;">₹ 5,151.00</div>
<div class="t" style="left:1517.3px;top:747px;font-size:14.5px;line-height:14.5px;font-weight:400;color:#333;font-style:normal;">Total Paid</div>
<div class="t" style="right:51px;top:747px;font-size:14.3px;line-height:14.3px;font-weight:400;color:#333;font-style:normal;">₹ 0.00</div>
<div class="t" style="left:1517.3px;top:768px;font-size:14.5px;line-height:14.5px;font-weight:400;color:#333;font-style:normal;">Pending Payment</div>
<div class="t" style="right:51px;top:768px;font-size:14.3px;line-height:14.3px;font-weight:400;color:#333;font-style:normal;">₹ 5,151.00</div>
</body></html>
